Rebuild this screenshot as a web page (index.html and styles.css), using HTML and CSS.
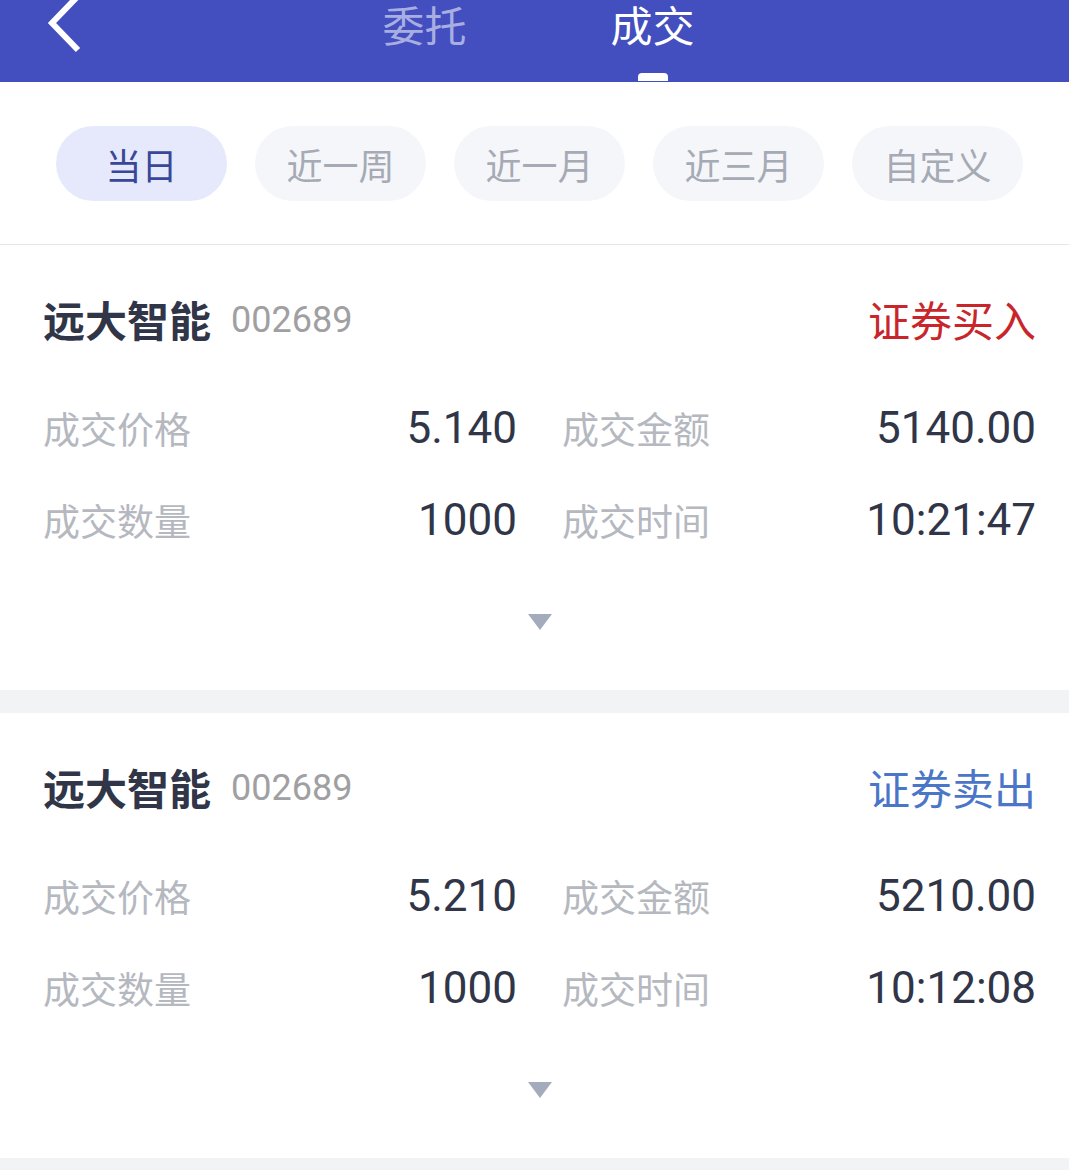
FILE: index.html
```html
<!DOCTYPE html>
<html lang="zh-CN">
<head>
    <meta charset="UTF-8">
    <title>成交</title>
    <link rel="stylesheet" href="styles.css">
</head>
<body>
<div class="header">
    <div class="back">
        <svg width="48" height="60" viewBox="0 0 48 60">
            <polyline points="39,-4 13,23 39,50" fill="none" stroke="#fff" stroke-width="6"/>
        </svg>
    </div>
    <div class="tabs">
        <span class="tab">委托</span>
        <span class="tab current">成交</span>
    </div>
    <div></div>
</div>

<div class="filter">
    <span class="pill current">当日</span>
    <span class="pill">近一周</span>
    <span class="pill">近一月</span>
    <span class="pill">近三月</span>
    <span class="pill">自定义</span>
</div>

<div class="list">
    <div class="card">
        <div class="title">
            <span class="name">远大智能</span>
            <span class="code">002689</span>
            <span class="type buy">证券买入</span>
        </div>
        <div class="grid">
            <div class="row"><span class="label">成交价格</span><span class="value">5.140</span></div>
            <div class="row"><span class="label">成交金额</span><span class="value">5140.00</span></div>
            <div class="row"><span class="label">成交数量</span><span class="value">1000</span></div>
            <div class="row"><span class="label">成交时间</span><span class="value">10:21:47</span></div>
        </div>
        <div class="more"><i class="arrow"></i></div>
    </div>
    <div class="card">
        <div class="title">
            <span class="name">远大智能</span>
            <span class="code">002689</span>
            <span class="type sell">证券卖出</span>
        </div>
        <div class="grid">
            <div class="row"><span class="label">成交价格</span><span class="value">5.210</span></div>
            <div class="row"><span class="label">成交金额</span><span class="value">5210.00</span></div>
            <div class="row"><span class="label">成交数量</span><span class="value">1000</span></div>
            <div class="row"><span class="label">成交时间</span><span class="value">10:12:08</span></div>
        </div>
        <div class="more"><i class="arrow"></i></div>
    </div>
</div>
</body>
</html>
```

FILE: styles.css
```css
* {
    padding: 0;
    margin: 0;
    box-sizing: border-box;
}

body {
    background: #f2f3f5;
    font-family: "Noto Sans CJK SC", "Noto Sans", sans-serif;
    overflow: hidden;
}

.header {
    height: 82px;
    background: #434fbf;
    display: grid;
    grid-template-columns: 1fr auto 1fr;
}

.back {
    padding-left: 39px;
    height: 60px;
}

.back svg {
    display: block;
}

.tabs {
    display: flex;
    gap: 144px;
    padding-left: 8px;
}

.tab {
    position: relative;
    font-size: 42px;
    line-height: 47px;
    color: #a9aee2;
    height: 82px;
}

.tab.current {
    color: #fff;
}

.tab.current::after {
    content: "";
    position: absolute;
    left: 50%;
    top: 73px;
    width: 30px;
    height: 8px;
    margin-left: -15px;
    border-radius: 4px 4px 0 0;
    background: #fff;
}

.filter {
    background: #fff;
    display: flex;
    gap: 28px;
    padding: 44px 0 43px 56px;
    border-bottom: 1px solid #e6e7ea;
}

.pill {
    width: 171px;
    height: 75px;
    border-radius: 38px;
    background: #f5f6fa;
    color: #a5aab5;
    font-size: 36px;
    display: flex;
    align-items: center;
    justify-content: center;
}

.pill.current {
    background: #e5e9fb;
    color: #3a4799;
}

.list {
    display: flex;
    flex-direction: column;
    gap: 23px;
}

.card {
    background: #fff;
    padding: 50px 33px 60px 43px;
}

.title {
    display: flex;
    align-items: center;
    height: 46px;
}

.name {
    font-size: 42px;
    font-weight: bold;
    color: #303548;
}

.code {
    font-family: Roboto, "Noto Sans CJK SC", sans-serif;
    font-size: 36px;
    color: #a0a0a3;
    margin-left: 20px;
    padding-top: 3px;
}

.type {
    margin-left: auto;
    font-size: 42px;
}

.buy {
    color: #c8262b;
}

.sell {
    color: #4a75c8;
}

.grid {
    margin-top: 41px;
    display: grid;
    grid-template-columns: 1fr 1fr;
    column-gap: 45px;
}

.row {
    height: 92px;
    display: flex;
    align-items: center;
    justify-content: space-between;
}

.label {
    font-size: 37px;
    color: #b5b8bf;
}

.value {
    font-family: Roboto, "Noto Sans CJK SC", sans-serif;
    font-size: 44px;
    color: #303548;
    padding-left: 2px;
}

.more {
    margin-top: 48px;
    display: flex;
    justify-content: center;
}

.arrow {
    display: block;
    width: 0;
    height: 0;
    border-left: 12px solid transparent;
    border-right: 12px solid transparent;
    border-top: 16px solid #a3abbd;
}
```
